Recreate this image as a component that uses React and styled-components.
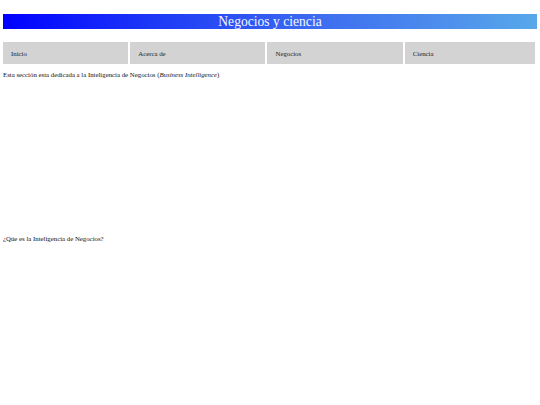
import React from "react";
import styled, { createGlobalStyle } from "styled-components";

const GlobalStyle = createGlobalStyle`
  html, body {
    margin: 0;
    padding: 0;
    background: #fff;
  }
  body {
    font-family: "Liberation Serif", "Times New Roman", serif;
    color: #111;
  }
`;

const Page = styled.div`
  padding: 14px 3px 0 3px;
`;

const Banner = styled.header`
  height: 15px;
  background: linear-gradient(to right, #0000ff 0%, #1f3cf6 30%, #3e6ef0 60%, #58a8ea 100%);
  display: flex;
  justify-content: center;
  align-items: center;
`;

const Title = styled.h1`
  margin: 0;
  font-size: 13.6px;
  font-weight: normal;
  line-height: 15px;
  color: #f4f6ff;
`;

const Nav = styled.nav`
  margin-top: 13px;
  margin-right: 2px;
  display: grid;
  grid-template-columns: 125fr 135fr 135fr 130fr;
  gap: 2px;
`;

const NavItem = styled.div`
  height: 22px;
  background: #d3d3d3;
  display: flex;
  align-items: center;
  padding-left: 8px;
  font-size: 6.8px;
  color: #222;
`;

const Text = styled.p`
  margin: ${(p) => p.$top}px 0 0 0;
  font-size: 6.8px;
  line-height: 8px;
`;

const App = () => {
  const links = ["Inicio", "Acerca de", "Negocios", "Ciencia"];
  return (
    <>
      <GlobalStyle />
      <Page>
        <Banner>
          <Title>Negocios y ciencia</Title>
        </Banner>
        <Nav>
          {links.map((l) => (
            <NavItem key={l}>{l}</NavItem>
          ))}
        </Nav>
        <Text $top={7}>
          Esta sección esta dedicada a la Inteligencia de Negocios (<i>Business Intelligence</i>)
        </Text>
        <Text $top={156}>¿Qúe es la Inteligencia de Negocios?</Text>
      </Page>
    </>
  );
};

export default App;
